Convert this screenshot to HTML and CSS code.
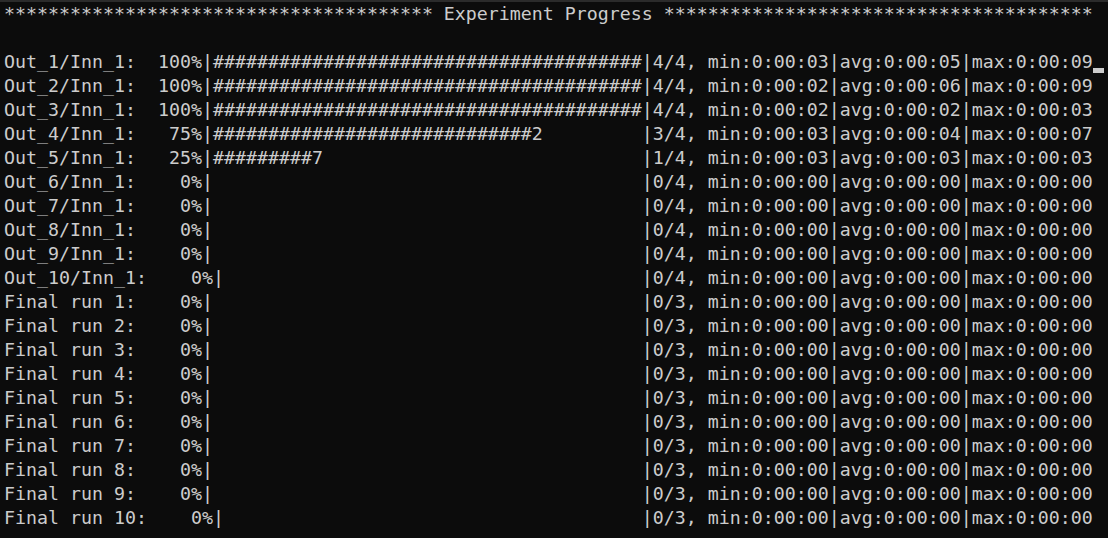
FILE: index.html
```html
<!DOCTYPE html>
<html lang="en">
<head>
<meta charset="utf-8">
<title>Experiment Progress</title>
<link rel="stylesheet" href="styles.css">
</head>
<body>
<main class="terminal">
<div class="line">*************************************** Experiment Progress ***************************************</div>
<div class="line"> </div>
<div class="line"><span>Out_1/Inn_1:  100%|</span><span class="bar">#######################################</span><span>|4/4, min:0:00:03|avg:0:00:05|max:0:00:09</span><span class="cursor"></span></div>
<div class="line"><span>Out_2/Inn_1:  100%|</span><span class="bar">#######################################</span><span>|4/4, min:0:00:02|avg:0:00:06|max:0:00:09</span></div>
<div class="line"><span>Out_3/Inn_1:  100%|</span><span class="bar">#######################################</span><span>|4/4, min:0:00:02|avg:0:00:02|max:0:00:03</span></div>
<div class="line"><span>Out_4/Inn_1:   75%|</span><span class="bar">#############################2</span><span>|3/4, min:0:00:03|avg:0:00:04|max:0:00:07</span></div>
<div class="line"><span>Out_5/Inn_1:   25%|</span><span class="bar">#########7</span><span>|1/4, min:0:00:03|avg:0:00:03|max:0:00:03</span></div>
<div class="line"><span>Out_6/Inn_1:    0%|</span><span class="bar"></span><span>|0/4, min:0:00:00|avg:0:00:00|max:0:00:00</span></div>
<div class="line"><span>Out_7/Inn_1:    0%|</span><span class="bar"></span><span>|0/4, min:0:00:00|avg:0:00:00|max:0:00:00</span></div>
<div class="line"><span>Out_8/Inn_1:    0%|</span><span class="bar"></span><span>|0/4, min:0:00:00|avg:0:00:00|max:0:00:00</span></div>
<div class="line"><span>Out_9/Inn_1:    0%|</span><span class="bar"></span><span>|0/4, min:0:00:00|avg:0:00:00|max:0:00:00</span></div>
<div class="line"><span>Out_10/Inn_1:    0%|</span><span class="bar narrow"></span><span>|0/4, min:0:00:00|avg:0:00:00|max:0:00:00</span></div>
<div class="line"><span>Final run 1:    0%|</span><span class="bar"></span><span>|0/3, min:0:00:00|avg:0:00:00|max:0:00:00</span></div>
<div class="line"><span>Final run 2:    0%|</span><span class="bar"></span><span>|0/3, min:0:00:00|avg:0:00:00|max:0:00:00</span></div>
<div class="line"><span>Final run 3:    0%|</span><span class="bar"></span><span>|0/3, min:0:00:00|avg:0:00:00|max:0:00:00</span></div>
<div class="line"><span>Final run 4:    0%|</span><span class="bar"></span><span>|0/3, min:0:00:00|avg:0:00:00|max:0:00:00</span></div>
<div class="line"><span>Final run 5:    0%|</span><span class="bar"></span><span>|0/3, min:0:00:00|avg:0:00:00|max:0:00:00</span></div>
<div class="line"><span>Final run 6:    0%|</span><span class="bar"></span><span>|0/3, min:0:00:00|avg:0:00:00|max:0:00:00</span></div>
<div class="line"><span>Final run 7:    0%|</span><span class="bar"></span><span>|0/3, min:0:00:00|avg:0:00:00|max:0:00:00</span></div>
<div class="line"><span>Final run 8:    0%|</span><span class="bar"></span><span>|0/3, min:0:00:00|avg:0:00:00|max:0:00:00</span></div>
<div class="line"><span>Final run 9:    0%|</span><span class="bar"></span><span>|0/3, min:0:00:00|avg:0:00:00|max:0:00:00</span></div>
<div class="line"><span>Final run 10:    0%|</span><span class="bar narrow"></span><span>|0/3, min:0:00:00|avg:0:00:00|max:0:00:00</span></div>
</main>
</body>
</html>
```
FILE: styles.css
```css
html, body {
  margin: 0;
  padding: 0;
  background: #0c0c0c;
}
body {
  width: 1108px;
  height: 538px;
  overflow: hidden;
}
.terminal {
  border-top: 2px solid #2b2b2b;
  padding: 0 0 0 4px;
  color: #cccccc;
  font-family: "DejaVu Sans Mono", monospace;
  font-size: 18.271px;
  line-height: 24px;
}
.line {
  white-space: pre;
  height: 24px;
}
.bar {
  display: inline-block;
  width: 39ch;
  white-space: pre;
}
.bar.narrow {
  width: 38ch;
}
.cursor {
  display: inline-block;
  width: 11px;
  height: 5px;
  background: #cccccc;
  vertical-align: -5px;
}
```
